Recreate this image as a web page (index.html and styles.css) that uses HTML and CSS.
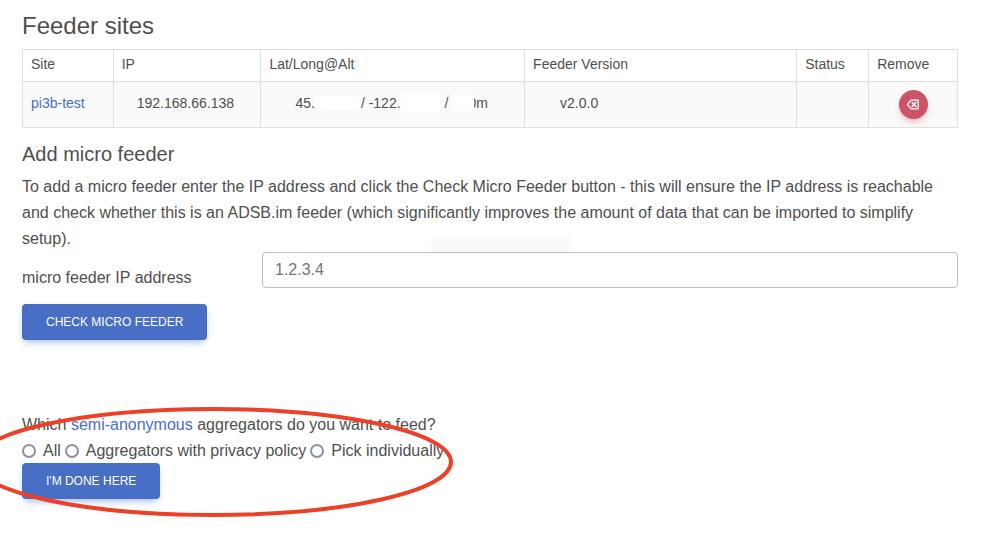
FILE: index.html
```html
<!DOCTYPE html>
<html lang="en">
<head>
<meta charset="utf-8">
<meta name="viewport" content="width=device-width, initial-scale=1">
<title>Feeder sites</title>
<link rel="stylesheet" href="styles.css">
</head>
<body>
<main class="page">
  <h2 class="title">Feeder sites</h2>
  <table class="sites">
    <colgroup>
      <col class="col-site"><col class="col-ip"><col class="col-loc"><col class="col-version"><col class="col-status"><col class="col-remove">
    </colgroup>
    <thead>
      <tr><th>Site</th><th>IP</th><th>Lat/Long@Alt</th><th>Feeder Version</th><th>Status</th><th>Remove</th></tr>
    </thead>
    <tbody>
      <tr>
        <td><a class="link" href="#">pi3b-test</a></td>
        <td class="ip">192.168.66.138</td>
        <td>
          <div class="location">
            <span>45.</span><span class="patch patch-lat"></span><span>/ -122.</span><span class="patch patch-long"></span><span>/</span><span class="patch patch-alt"></span><span class="alt">0m</span>
          </div>
        </td>
        <td class="version">v2.0.0</td>
        <td></td>
        <td class="remove">
          <button class="remove-button" type="button" aria-label="Remove pi3b-test">
            <svg class="remove-icon" viewBox="0 0 16 16" aria-hidden="true">
              <path d="M5.5 2.5H14.4V13.5H5.5L1.2 8Z" fill="none" stroke="currentColor" stroke-width="1.6" stroke-linejoin="round"/>
              <path d="M6.4 5L12 11M12 5L6.4 11" fill="none" stroke="currentColor" stroke-width="2"/>
            </svg>
          </button>
        </td>
      </tr>
    </tbody>
  </table>

  <h3 class="subtitle">Add micro feeder</h3>
  <p class="intro">To add a micro feeder enter the IP address and click the Check Micro Feeder button - this will ensure the IP address is reachable and check whether this is an ADSB.im feeder (which significantly improves the amount of data that can be imported to simplify setup).</p>
  <form class="feeder-form">
    <div class="field">
      <label class="field-label" for="feeder-ip">micro feeder IP address</label>
      <div class="field-control">
        <input class="field-input" id="feeder-ip" type="text" placeholder="1.2.3.4">
        <span class="smudge"></span>
      </div>
    </div>
    <button class="button" type="button">CHECK MICRO FEEDER</button>
  </form>

  <form class="aggregators">
    <fieldset class="choices">
      <legend class="question">Which <a class="link" href="#">semi-anonymous</a> aggregators do you want to feed?</legend>
      <div class="options">
        <label class="option"><input class="radio" type="radio" name="aggregators">All</label>
        <label class="option"><input class="radio" type="radio" name="aggregators">Aggregators with privacy policy</label>
        <label class="option"><input class="radio" type="radio" name="aggregators">Pick individually</label>
      </div>
    </fieldset>
    <button class="button" type="button">I'M DONE HERE</button>
    <svg class="marker" viewBox="0 0 480 112" aria-hidden="true">
      <ellipse cx="240" cy="56" rx="238" ry="53" fill="none" stroke="#ec4126" stroke-width="4"/>
    </svg>
  </form>
</main>
</body>
</html>
```
FILE: styles.css
```css
* {
  box-sizing: border-box;
}

body {
  margin: 0;
  background: #fff;
  color: #4f4f4f;
  font-family: "Liberation Sans", Arial, sans-serif;
  font-size: 16px;
  line-height: 26px;
}

.page {
  min-height: 100vh;
  padding: 11px 44px 20px 22px;
  overflow-x: hidden;
}

.title {
  margin: 0 0 8px;
  font-size: 24px;
  font-weight: 400;
  line-height: 30px;
}

.subtitle {
  margin: 14px 0 7px;
  font-size: 20px;
  font-weight: 400;
  line-height: 25px;
}

.link {
  color: #486ec5;
  text-decoration: none;
}

.sites {
  width: 100%;
  table-layout: fixed;
  border-collapse: collapse;
  font-size: 14px;
  line-height: 22px;
}

.col-site { width: 9.7%; }
.col-ip { width: 15.8%; }
.col-loc { width: 28.2%; }
.col-version { width: 29.1%; }
.col-status { width: 7.7%; }
.col-remove { width: 9.5%; }

.sites th,
.sites td {
  padding: 3px 8px 6px;
  border: 1px solid #dfdfdf;
  font-weight: 400;
  text-align: left;
  vertical-align: middle;
}

.sites td {
  height: 46px;
  background: #fafafa;
}

.sites .ip {
  padding-left: 23px;
}

.sites .version {
  padding-left: 35px;
}

.sites .remove {
  padding: 0;
  text-align: center;
}

.location {
  display: flex;
  align-items: center;
  padding-left: 26px;
  white-space: nowrap;
}

.patch {
  flex: none;
  background: #fff;
}

.patch-lat {
  width: 44px;
  height: 14px;
  margin-right: 2px;
}

.patch-long {
  width: 39px;
  height: 19px;
  margin-right: 5px;
}

.patch-alt {
  z-index: 1;
  width: 22px;
  height: 16px;
  margin: 0 -6px 0 4px;
}

.remove-button {
  display: inline-flex;
  align-items: center;
  justify-content: center;
  width: 29px;
  height: 29px;
  padding: 0;
  border: 0;
  border-radius: 50%;
  background: #cd5465;
  box-shadow: 0 4px 9px -3px #dc4c6499;
  color: #fff;
  vertical-align: middle;
}

.remove-icon {
  width: 14px;
  height: 13px;
}

.intro {
  margin: 0;
}

.field {
  display: flex;
  align-items: flex-start;
}

.field-label {
  flex: 0 0 240px;
  padding-top: 13px;
}

.field-control {
  position: relative;
  flex: 1;
}

.field-input {
  display: block;
  width: 100%;
  height: 36px;
  padding: 0 12px;
  border: 1px solid #bdbdbd;
  border-radius: 4px;
  background: #fff;
  color: #4f4f4f;
  font: inherit;
}

.field-input::placeholder {
  color: #757575;
  opacity: 1;
}

.smudge {
  position: absolute;
  bottom: 100%;
  left: 169px;
  width: 140px;
  height: 16px;
  background: #fafafa;
}

.feeder-form .button {
  margin-top: 13px;
}

.button {
  display: block;
  height: 36px;
  padding: 0 24px;
  border: 0;
  border-radius: 4px;
  background: #486ec5;
  box-shadow: 0 4px 9px -3px #3b71ca99;
  color: #fff;
  font-family: inherit;
  font-size: 12px;
}

.aggregators {
  position: relative;
  margin-top: 72px;
}

.choices {
  margin: 0;
  padding: 0;
  border: 0;
}

.question {
  padding: 0;
}

.options {
  display: flex;
  gap: 4px;
  line-height: 25px;
}

.option {
  display: flex;
  align-items: center;
}

.radio {
  appearance: none;
  width: 14px;
  height: 14px;
  margin: 0 7px 0 0;
  border: 2px solid #8f8f9d;
  border-radius: 50%;
  background: #fff;
}

.marker {
  position: absolute;
  top: -6px;
  left: -49px;
  width: 480px;
  height: 112px;
  pointer-events: none;
}
```
